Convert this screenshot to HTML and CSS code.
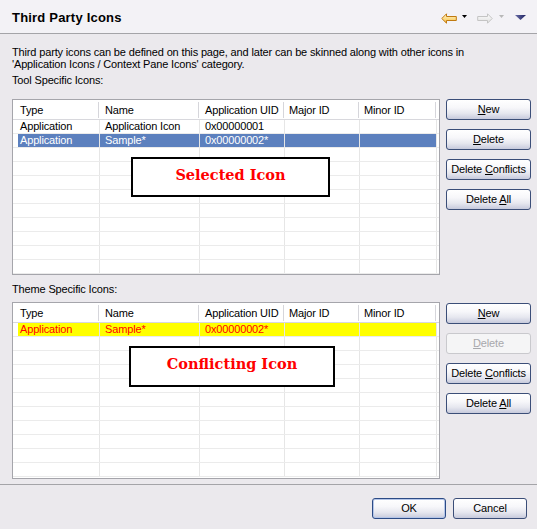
FILE: index.html
```html
<!DOCTYPE html>
<html>
<head>
<meta charset="utf-8">
<title>Third Party Icons</title>
<link rel="stylesheet" href="styles.css">
</head>
<body>
<div class="dialog">
  <div class="header">
    <div class="title">Third Party Icons</div>
    <div class="toolbar">
      <svg class="ico-arrow" width="16" height="11" viewBox="0 0 16 11">
        <defs><linearGradient id="gback" x1="0" y1="0" x2="0" y2="1"><stop offset="0" stop-color="#fff7d2"/><stop offset="0.6" stop-color="#fbd77a"/><stop offset="1" stop-color="#eea62a"/></linearGradient></defs>
        <path d="M0.8 5.5 L5.5 0.8 V3.5 H15.3 V7.5 H5.5 V10.2 Z" fill="url(#gback)" stroke="#c07a10" stroke-linejoin="round"/>
      </svg>
      <svg class="ico-tri" width="5" height="3" viewBox="0 0 5 3"><path d="M0 0 H5 L2.5 3 Z" fill="#000"/></svg>
      <svg class="ico-arrow fwd" width="16" height="11" viewBox="0 0 16 11">
        <defs><linearGradient id="gfwd" x1="0" y1="0" x2="0" y2="1"><stop offset="0" stop-color="#ffffff"/><stop offset="1" stop-color="#dedede"/></linearGradient></defs>
        <path d="M15.2 5.5 L10.5 0.8 V3.5 H0.7 V7.5 H10.5 V10.2 Z" fill="url(#gfwd)" stroke="#c4c4c4" stroke-linejoin="round"/>
      </svg>
      <svg class="ico-tri grey" width="5" height="3" viewBox="0 0 5 3"><path d="M0 0 H5 L2.5 3 Z" fill="#b8b8b8"/></svg>
      <svg class="ico-menu" width="11" height="5" viewBox="0 0 11 5">
        <defs><linearGradient id="gmenu" x1="0" y1="0" x2="1" y2="0"><stop offset="0" stop-color="#6a6ea6"/><stop offset="1" stop-color="#1c2060"/></linearGradient></defs>
        <path d="M0 0 H11 L5.5 5 Z" fill="url(#gmenu)"/>
      </svg>
    </div>
  </div>

  <div class="content">
    <p class="desc">Third party icons can be defined on this page, and later can be skinned along with other icons in<br>'Application Icons / Context Pane Icons' category.</p>

    <p class="label">Tool Specific Icons:</p>
    <div class="group">
      <div class="list">
        <div class="head">
          <div class="cell w1">Type</div><div class="cell w2">Name</div><div class="cell w3">Application UID</div><div class="cell w4">Major ID</div><div class="cell w5">Minor ID</div>
        </div>
        <div class="row"><div class="cell w1">Application</div><div class="cell w2">Application Icon</div><div class="cell w3">0x00000001</div><div class="cell w4"></div><div class="cell w5"></div></div>
        <div class="row selected"><div class="cell w1">Application</div><div class="cell w2">Sample*</div><div class="cell w3">0x00000002*</div><div class="cell w4"></div><div class="cell w5"></div></div>
        <div class="row"><div class="cell w1"></div><div class="cell w2"></div><div class="cell w3"></div><div class="cell w4"></div><div class="cell w5"></div></div>
        <div class="row"><div class="cell w1"></div><div class="cell w2"></div><div class="cell w3"></div><div class="cell w4"></div><div class="cell w5"></div></div>
        <div class="row"><div class="cell w1"></div><div class="cell w2"></div><div class="cell w3"></div><div class="cell w4"></div><div class="cell w5"></div></div>
        <div class="row"><div class="cell w1"></div><div class="cell w2"></div><div class="cell w3"></div><div class="cell w4"></div><div class="cell w5"></div></div>
        <div class="row"><div class="cell w1"></div><div class="cell w2"></div><div class="cell w3"></div><div class="cell w4"></div><div class="cell w5"></div></div>
        <div class="row"><div class="cell w1"></div><div class="cell w2"></div><div class="cell w3"></div><div class="cell w4"></div><div class="cell w5"></div></div>
        <div class="row"><div class="cell w1"></div><div class="cell w2"></div><div class="cell w3"></div><div class="cell w4"></div><div class="cell w5"></div></div>
        <div class="row"><div class="cell w1"></div><div class="cell w2"></div><div class="cell w3"></div><div class="cell w4"></div><div class="cell w5"></div></div>
        <div class="row"><div class="cell w1"></div><div class="cell w2"></div><div class="cell w3"></div><div class="cell w4"></div><div class="cell w5"></div></div>
        <div class="callout callout-selected">Selected Icon</div>
      </div>
      <div class="btns">
        <button class="btn"><u>N</u>ew</button>
        <button class="btn"><u>D</u>elete</button>
        <button class="btn">Delete <u>C</u>onflicts</button>
        <button class="btn">Delete <u>A</u>ll</button>
      </div>
    </div>

    <p class="label label-theme">Theme Specific Icons:</p>
    <div class="group group-theme">
      <div class="list list-theme">
        <div class="head">
          <div class="cell w1">Type</div><div class="cell w2">Name</div><div class="cell w3">Application UID</div><div class="cell w4">Major ID</div><div class="cell w5">Minor ID</div>
        </div>
        <div class="row conflict"><div class="cell w1">Application</div><div class="cell w2">Sample*</div><div class="cell w3">0x00000002*</div><div class="cell w4"></div><div class="cell w5"></div></div>
        <div class="row"><div class="cell w1"></div><div class="cell w2"></div><div class="cell w3"></div><div class="cell w4"></div><div class="cell w5"></div></div>
        <div class="row"><div class="cell w1"></div><div class="cell w2"></div><div class="cell w3"></div><div class="cell w4"></div><div class="cell w5"></div></div>
        <div class="row"><div class="cell w1"></div><div class="cell w2"></div><div class="cell w3"></div><div class="cell w4"></div><div class="cell w5"></div></div>
        <div class="row"><div class="cell w1"></div><div class="cell w2"></div><div class="cell w3"></div><div class="cell w4"></div><div class="cell w5"></div></div>
        <div class="row"><div class="cell w1"></div><div class="cell w2"></div><div class="cell w3"></div><div class="cell w4"></div><div class="cell w5"></div></div>
        <div class="row"><div class="cell w1"></div><div class="cell w2"></div><div class="cell w3"></div><div class="cell w4"></div><div class="cell w5"></div></div>
        <div class="row"><div class="cell w1"></div><div class="cell w2"></div><div class="cell w3"></div><div class="cell w4"></div><div class="cell w5"></div></div>
        <div class="row"><div class="cell w1"></div><div class="cell w2"></div><div class="cell w3"></div><div class="cell w4"></div><div class="cell w5"></div></div>
        <div class="row"><div class="cell w1"></div><div class="cell w2"></div><div class="cell w3"></div><div class="cell w4"></div><div class="cell w5"></div></div>
        <div class="row"><div class="cell w1"></div><div class="cell w2"></div><div class="cell w3"></div><div class="cell w4"></div><div class="cell w5"></div></div>
        <div class="callout callout-conflict">Conflicting Icon</div>
      </div>
      <div class="btns">
        <button class="btn"><u>N</u>ew</button>
        <button class="btn" disabled><u>D</u>elete</button>
        <button class="btn">Delete <u>C</u>onflicts</button>
        <button class="btn">Delete <u>A</u>ll</button>
      </div>
    </div>
  </div>

  <div class="footer">
    <button class="btn btn-wide btn-default">OK</button>
    <button class="btn btn-wide">Cancel</button>
  </div>
</div>
</body>
</html>
```

FILE: styles.css
```css
* { box-sizing: border-box; }
html, body { margin: 0; padding: 0; }
body {
  width: 537px;
  height: 529px;
  overflow: hidden;
  background: #ebe9ed;
  font-family: "Liberation Sans", Arial, sans-serif;
  font-size: 11px;
  letter-spacing: -0.15px;
  color: #000;
}
.dialog { width: 537px; height: 529px; }

.header {
  height: 34px;
  background: #f3f2f6;
  border-bottom: 1px solid #a4a4a8;
  display: flex;
  align-items: flex-start;
  padding: 10px 0 0 12px;
}
.title {
  font-size: 13px;
  font-weight: bold;
  line-height: 15px;
  letter-spacing: 0.2px;
}
.toolbar {
  margin-left: auto;
  margin-top: 3px;
  padding-right: 11px;
  display: flex;
  align-items: flex-start;
}
.ico-arrow { display: block; }
.ico-tri { display: block; margin: 2px 0 0 5px; }
.ico-arrow.fwd { margin-left: 10px; }
.ico-tri.grey { margin-left: 6px; }
.ico-menu { display: block; margin: 2px 0 0 11px; }

.content { padding: 0 6px 0 12px; }
.desc { margin: 12px 0 0; line-height: 12px; }
.label { margin: 4px 0 0; line-height: 12px; }
.label-theme { margin-top: 8px; }

.group { display: flex; gap: 6px; margin-top: 13px; }
.group-theme { margin-top: 7px; }

.list {
  position: relative;
  width: 428px;
  height: 176px;
  border: 1px solid #a5a5ab;
  background: #fff;
  overflow: hidden;
  flex: none;
}
.list-theme { height: 177px; }

.head {
  display: flex;
  height: 20px;
  padding-top: 1px;
  line-height: 18px;
  border-bottom: 1px solid #d8d8dd;
}
.row {
  display: flex;
  height: 14px;
  line-height: 13px;
  border-bottom: 1px solid #ebebeb;
}
.cell { flex: none; white-space: nowrap; overflow: hidden; }
.w1 { width: 87px; padding-left: 7px; }
.w2 { width: 100px; padding-left: 5px; }
.w3 { width: 85px; padding-left: 5px; }
.w4 { width: 75px; padding-left: 4px; }
.w5 { width: 77px; padding-left: 4px; }

.head .cell {
  background: linear-gradient(#d6d6db, #d6d6db) no-repeat right 1px top 1px / 1px 16px;
}
.row .cell { border-right: 1px solid #e6e6e6; }

.row.selected .cell { background: #5c80be; color: #fff; }
.row.selected .w1 { background: linear-gradient(90deg, transparent 5px, #5c80be 5px); }
.row.conflict .cell { background: #ffff00; color: #ff0000; }
.row.conflict .w1 { background: linear-gradient(90deg, transparent 5px, #ffff00 5px); }

.callout {
  position: absolute;
  border: 2px solid #000;
  background: #fff;
  display: flex;
  align-items: center;
  justify-content: center;
  padding-bottom: 6px;
  color: #ff0000;
  font-family: "DejaVu Serif", "Liberation Serif", serif;
  font-weight: bold;
  font-size: 14.5px;
  letter-spacing: 0;
}
.callout-selected { left: 118px; top: 57px; width: 199px; height: 40px; }
.callout-conflict { left: 116px; top: 43px; width: 206px; height: 41px; }

.btns {
  display: flex;
  flex-direction: column;
  gap: 9px;
  width: 85px;
}
.group-theme .btns { padding-top: 1px; }

.btn {
  display: block;
  text-align: center;
  height: 21px;
  width: 85px;
  padding: 0;
  margin: 0;
  border: 1px solid #3b4e78;
  border-radius: 3px;
  background: linear-gradient(#ffffff 0%, #f7f7fa 40%, #e6e7ef 70%, #c7cadc 100%);
  font-family: inherit;
  font-size: 11px;
  letter-spacing: -0.15px;
  color: #000;
  line-height: 13px;
  white-space: nowrap;
}
.btn u { text-decoration: underline; }
.btn:disabled {
  border-color: #c9c9cd;
  background: #f5f5f6;
  color: #a8a8ac;
}

.footer {
  margin-top: 5px;
  border-top: 1px solid #a4a4a8;
  padding: 13px 10px 0 0;
  display: flex;
  justify-content: flex-end;
  gap: 7px;
}
.btn-wide { width: 74px; }
.btn-default {
  border-color: #2c4b86;
  box-shadow: inset 0 0 0 1px #b5c6e8;
}
```
